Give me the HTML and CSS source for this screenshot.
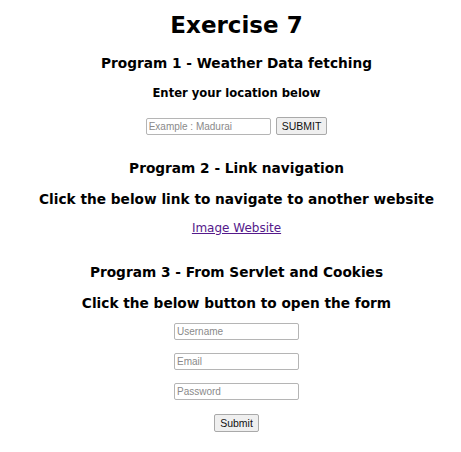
FILE: index.html
```html
<!DOCTYPE html>
<html lang="en">
<head>
    <meta charset="UTF-8">
    <meta name="viewport" content="width=device-width, initial-scale=1.0">
    <title>Exercise 7</title>
    <link rel="stylesheet" href="styles.css">
</head>
<body>
    <h1>Exercise 7</h1>

    <!-- Program 1 -->
    <h2 class="first">Program 1 - Weather Data fetching</h2>
    <h3>Enter your location below</h3>
    <form class="weather-form">
        <input type="text" placeholder="Example : Madurai">
        <button type="button">SUBMIT</button>
    </form>

    <!-- Program 2 -->
    <h2>Program 2 - Link navigation</h2>
    <h2 class="sub">Click the below link to navigate to another website</h2>
    <p class="link-row"><a href="#">Image Website</a></p>

    <!-- Program 3 -->
    <h2 class="prog3">Program 3 - From Servlet and Cookies</h2>
    <h2 class="sub">Click the below button to open the form</h2>
    <form class="user-form">
        <input type="text" placeholder="Username">
        <input type="text" placeholder="Email">
        <input type="password" placeholder="Password">
        <button type="button">Submit</button>
    </form>
</body>
</html>
```

FILE: styles.css
```css
/* Basic Styling */
body {
    margin: 0;
    padding: 0 0 0 12px;
    background: #fff;
    color: #000;
    text-align: center;
    font-family: 'DejaVu Sans', Verdana, sans-serif;
}

h1 {
    font-size: 23px;
    line-height: 30px;
    margin: 10px 0 0;
}

h2 {
    font-size: 13.7px;
    line-height: 20px;
    margin: 23px 0 0;
}

h2.first {
    margin-top: 13px;
}

h2.sub {
    margin-top: 11px;
}

h2.prog3 {
    margin-top: 27px;
}

h3 {
    font-size: 11.6px;
    line-height: 18px;
    margin: 11px 0 0;
}

/* Inputs and buttons */
input {
    box-sizing: border-box;
    width: 125px;
    height: 17px;
    padding: 0 2px;
    border: 1px solid #b5b5b5;
    border-radius: 2px;
    font-family: 'Liberation Sans', Arial, sans-serif;
    font-size: 10px;
    margin: 0;
}

input::placeholder {
    color: #8a8a8a;
}

button {
    box-sizing: border-box;
    height: 18px;
    padding: 0 5px;
    border: 1px solid #a9a9a9;
    border-radius: 2px;
    background: #efefef;
    font-family: 'Liberation Sans', Arial, sans-serif;
    font-size: 10.5px;
    color: #111;
    margin: 0;
}

.weather-form {
    display: flex;
    justify-content: center;
    align-items: center;
    gap: 5px;
    margin: 15px 0 0;
}

.link-row {
    font-size: 12px;
    line-height: 14px;
    margin: 12px 0 0;
}

.link-row a {
    color: #551a8b;
}

.user-form {
    display: flex;
    flex-direction: column;
    align-items: center;
    gap: 13px;
    margin: 10px 0 0;
}

.user-form button {
    margin-top: 1px;
}
```
